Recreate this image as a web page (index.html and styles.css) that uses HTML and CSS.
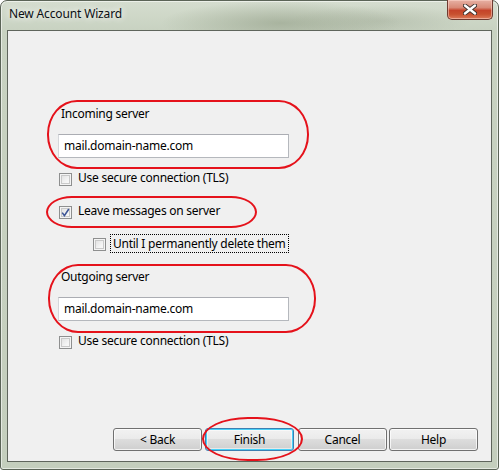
FILE: index.html
```html
<!DOCTYPE html>
<html lang="en">
<head>
<meta charset="utf-8">
<title>New Account Wizard</title>
<link rel="stylesheet" href="styles.css">
</head>
<body>
<div class="window">
  <div class="titlebar">
    <span class="title">New Account Wizard</span>
    <button class="close" aria-label="Close">
      <svg width="14" height="11" viewBox="0 0 14 11">
        <path d="M2 1.5 L12 9.5 M12 1.5 L2 9.5" stroke="#3b2f2c" stroke-width="4.2" stroke-linecap="round"/>
        <path d="M2 1.5 L12 9.5 M12 1.5 L2 9.5" stroke="#ffffff" stroke-width="2.4" stroke-linecap="round"/>
      </svg>
    </button>
  </div>
  <div class="client">
    <div class="form">
      <div class="label">Incoming server</div>
      <div class="field">mail.domain-name.com</div>
      <label class="check row-tls1"><span class="box"></span><span class="text">Use secure connection (TLS)</span></label>
      <label class="check row-leave"><span class="box checked"><svg width="9" height="9" viewBox="0 0 9 9"><path d="M1.2 4.6 L3.4 7.6 L7.8 1" fill="none" stroke="#3d5596" stroke-width="1.6"/></svg></span><span class="text">Leave messages on server</span></label>
      <label class="check row-until"><span class="box"></span><span class="text focus">Until I permanently delete them</span></label>
      <div class="label label-out">Outgoing server</div>
      <div class="field">mail.domain-name.com</div>
      <label class="check row-tls2"><span class="box"></span><span class="text">Use secure connection (TLS)</span></label>
    </div>
    <div class="buttons">
      <button class="btn btn-back">&lt; Back</button>
      <button class="btn btn-finish default">Finish</button>
      <button class="btn btn-cancel">Cancel</button>
      <button class="btn btn-help">Help</button>
    </div>
    <span class="mark mark-in"></span>
    <span class="mark mark-leave"></span>
    <span class="mark mark-out"></span>
    <span class="mark mark-finish"></span>
  </div>
</div>
</body>
</html>
```
FILE: styles.css
```css
html, body {
  margin: 0;
  padding: 0;
  background: #ffffff;
}

body {
  font-family: "Noto Sans", "Open Sans", sans-serif;
  font-size: 12px;
  letter-spacing: -0.25px;
  color: #000;
}

/* Window frame */
.window {
  box-sizing: border-box;
  width: 499px;
  height: 470px;
  display: flex;
  flex-direction: column;
  padding: 0 6px 7px 6px;
  border: 1px solid #5b6457;
  border-radius: 7px 7px 3px 3px;
  background:
    radial-gradient(ellipse 120px 22px at 280px 22px, rgba(140, 152, 128, 0.55), rgba(140, 152, 128, 0) 100%),
    radial-gradient(ellipse 90px 16px at 380px 20px, rgba(150, 160, 140, 0.35), rgba(150, 160, 140, 0) 100%),
    linear-gradient(to bottom, #d5ddcf 0, #c8d2c1 30px, #c4cebd 100%);
  box-shadow: inset 0 0 0 1px rgba(255, 255, 255, 0.55);
}

.titlebar {
  height: 29px;
  display: flex;
  justify-content: space-between;
  align-items: flex-start;
  margin-right: -1px;
}

.title {
  margin: 5px 0 0 2px;
  line-height: 16px;
  letter-spacing: -0.15px;
  color: #0b0f14;
  text-shadow: 0 0 6px rgba(255, 255, 255, 0.9), 0 0 10px rgba(255, 255, 255, 0.7);
}

.close {
  box-sizing: border-box;
  width: 46px;
  height: 20px;
  margin: -1px 0 0 0;
  padding: 0;
  border: 1px solid #6e3a30;
  border-top: none;
  border-radius: 0 0 5px 5px;
  display: flex;
  align-items: center;
  justify-content: center;
  background: linear-gradient(to bottom, #e7b1a4 0, #d88a77 40%, #c5432a 55%, #c8502f 75%, #dc7a5a 100%);
  box-shadow: inset 0 0 0 1px rgba(255, 220, 210, 0.5);
}

/* Client area */
.client {
  position: relative;
  flex: 1;
  display: flex;
  flex-direction: column;
  border: 1px solid #5f655c;
  background: #f0f0f0;
}

.form {
  display: flex;
  flex-direction: column;
  align-items: flex-start;
  padding: 75px 0 0 50px;
}

.label {
  line-height: 16px;
  margin-left: 3px;
}

.field {
  box-sizing: border-box;
  width: 231px;
  height: 24px;
  margin-top: 12px;
  padding-left: 5px;
  line-height: 22px;
  background: #fff;
  border: 1px solid #b5b8bd;
  border-top-color: #abadb3;
  border-left-color: #d5d7db;
}

.check {
  display: flex;
  align-items: flex-start;
  line-height: 16px;
}

.box {
  box-sizing: border-box;
  width: 13px;
  height: 13px;
  margin: 3px 6px 0 1px;
  border: 1px solid #8e8f8f;
  background: linear-gradient(135deg, #dcdcdc 0, #f4f4f4 60%, #fcfcfc 100%);
  box-shadow: inset 0 0 0 1px #f4f4f4, inset 0 0 0 2px #c9c9c9;
  display: flex;
  align-items: center;
  justify-content: center;
}

.box svg {
  display: block;
}

.row-tls1 { margin-top: 12px; }
.row-leave { margin-top: 17px; }
.row-until { margin-top: 15px; margin-left: 34px; }
.row-until .box { margin-top: 4px; margin-right: 4px; }
.row-tls2 { margin-top: 12px; }

.focus {
  padding: 1px 2px 0 2px;
  border: 1px dotted #000;
}

.label-out { margin-top: 16px; }

/* Dialog buttons */
.buttons {
  margin-top: auto;
  display: flex;
  justify-content: flex-end;
  padding: 0 13px 10px 0;
}

.btn {
  box-sizing: border-box;
  width: 89px;
  height: 23px;
  padding: 0;
  font-family: inherit;
  font-size: 12px;
  letter-spacing: inherit;
  color: #000;
  border: 1px solid #707070;
  border-radius: 3px;
  background: linear-gradient(to bottom, #f2f2f2 0, #ebebeb 45%, #dddddd 50%, #cfcfcf 100%);
  box-shadow: inset 0 0 0 1px rgba(255, 255, 255, 0.75);
}

.btn-finish { margin-left: 3px; }
.btn-cancel { margin-left: 4px; }
.btn-help { margin-left: 2px; }

.btn.default {
  border-color: #3c7fb1;
  box-shadow: inset 0 0 0 1px #48d0f7, inset 0 0 0 2px rgba(255, 255, 255, 0.5);
}

/* Hand-drawn red annotation rings */
.mark {
  position: absolute;
  box-sizing: border-box;
  border: 2px solid #e5121b;
  pointer-events: none;
}

.mark-in {
  left: 39px;
  top: 69px;
  width: 262px;
  height: 69px;
  border-radius: 30px / 34px;
}

.mark-leave {
  left: 38px;
  top: 165px;
  width: 211px;
  height: 32px;
  border-radius: 26px / 16px;
}

.mark-out {
  left: 40px;
  top: 233px;
  width: 268px;
  height: 69px;
  border-radius: 30px / 34px;
}

.mark-finish {
  left: 194px;
  top: 386px;
  width: 101px;
  height: 44px;
  border-radius: 46px / 22px;
}
```
